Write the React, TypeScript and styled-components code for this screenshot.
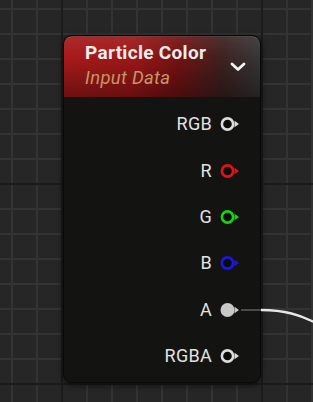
import styled, { createGlobalStyle } from "styled-components";

const GlobalStyle = createGlobalStyle`
  html, body {
    margin: 0;
    padding: 0;
    background: #262626;
  }
  body {
    font-family: Roboto, "Noto Sans", "Liberation Sans", sans-serif;
  }
`;

type PinKind = "rgb" | "r" | "g" | "b" | "a" | "rgba";

const pinColors: Record<PinKind, string> = {
  rgb: "#dcdcdc",
  r: "#e01414",
  g: "#12d612",
  b: "#1818e6",
  a: "#c8c8c8",
  rgba: "#dcdcdc",
};

const outputs: { label: string; kind: PinKind; filled?: boolean }[] = [
  { label: "RGB", kind: "rgb" },
  { label: "R", kind: "r" },
  { label: "G", kind: "g" },
  { label: "B", kind: "b" },
  { label: "A", kind: "a", filled: true },
  { label: "RGBA", kind: "rgba" },
];

const Canvas = styled.div`
  position: relative;
  width: 313px;
  height: 402px;
  overflow: hidden;
  background-color: #262626;
  background-image:
    linear-gradient(90deg, #1b1b1b 0 2px, transparent 2px),
    linear-gradient(180deg, #1b1b1b 0 2px, transparent 2px),
    linear-gradient(90deg, #333333 0 2px, transparent 2px),
    linear-gradient(180deg, #333333 0 2px, transparent 2px);
  background-size: 200px 100%, 100% 200px, 25px 100%, 100% 25px;
  background-position: 61px 0, 0 183px, 11px 0, 0 8px;
`;

const Node = styled.div`
  position: absolute;
  left: 63px;
  top: 35px;
  width: 198px;
  height: 348px;
  box-sizing: border-box;
  border: 1px solid #090909;
  border-radius: 9px;
  background: #131411;
  box-shadow: 0 2px 6px rgba(0, 0, 0, 0.6);
  display: flex;
  flex-direction: column;
  overflow: hidden;
`;

const Header = styled.div`
  height: 61px;
  flex: none;
  box-sizing: border-box;
  padding: 5px 14px 0 21px;
  display: flex;
  align-items: flex-start;
  justify-content: space-between;
  background-image:
    linear-gradient(180deg, rgba(255, 255, 255, 0.07) 0%, rgba(0, 0, 0, 0) 35%, rgba(0, 0, 0, 0.35) 100%),
    linear-gradient(90deg, #a81a1a 0%, #9d1717 35%, #741212 58%, #3e2020 80%, #363636 100%);
  border-top: 1px solid rgba(255, 255, 255, 0.18);
  border-radius: 8px 8px 0 0;
`;

const Titles = styled.div`
  display: flex;
  flex-direction: column;
`;

const Title = styled.span`
  color: #ececec;
  font-weight: 700;
  font-size: 19px;
  letter-spacing: 0.3px;
  line-height: 22px;
`;

const Subtitle = styled.span`
  color: #c8946a;
  font-style: italic;
  font-size: 18.5px;
  letter-spacing: 0.3px;
  line-height: 22px;
  margin-top: 3px;
`;

const Chevron = styled.svg`
  margin-top: 20px;
  flex: none;
`;

const Outputs = styled.div`
  display: flex;
  flex-direction: column;
  padding-top: 4px;
`;

const Row = styled.div`
  height: 46.4px;
  display: flex;
  align-items: center;
  justify-content: flex-end;
  padding-right: 18px;
  gap: 8px;
`;

const Label = styled.span`
  color: #e2e2e2;
  font-size: 18px;
  letter-spacing: 0.3px;
  line-height: 20px;
`;

const Pin = ({ color, filled }: { color: string; filled?: boolean }) => (
  <svg width="22" height="16" viewBox="0 0 22 16">
    {filled ? (
      <circle cx="7.5" cy="8" r="7" fill={color} />
    ) : (
      <circle cx="7.5" cy="8" r="5.6" fill="#0c0c0c" stroke={color} strokeWidth="2.6" />
    )}
    <polygon points="14.5,4.8 19,8 14.5,11.2" fill={color} />
  </svg>
);

const Wire = styled.svg`
  position: absolute;
  left: 0;
  top: 0;
  pointer-events: none;
`;

export default function App() {
  return (
    <>
      <GlobalStyle />
      <Canvas>
        <Node>
          <Header>
            <Titles>
              <Title>Particle Color</Title>
              <Subtitle>Input Data</Subtitle>
            </Titles>
            <Chevron width="16" height="10" viewBox="0 0 16 10">
              <polyline points="2,2 8,7.5 14,2" fill="none" stroke="#f4f4f4" strokeWidth="2.8" strokeLinecap="round" strokeLinejoin="round" />
            </Chevron>
          </Header>
          <Outputs>
            {outputs.map((o) => (
              <Row key={o.label}>
                <Label>{o.label}</Label>
                <Pin color={pinColors[o.kind]} filled={o.filled} />
              </Row>
            ))}
          </Outputs>
        </Node>
        <Wire width="313" height="402" viewBox="0 0 313 402">
          <line x1="241" y1="310" x2="261" y2="310" stroke="#4a4a4a" strokeWidth="2" />
          <path d="M261 310 C 285 310, 300 315, 316 323" fill="none" stroke="#e6e6e6" strokeWidth="2.4" />
        </Wire>
      </Canvas>
    </>
  );
}
